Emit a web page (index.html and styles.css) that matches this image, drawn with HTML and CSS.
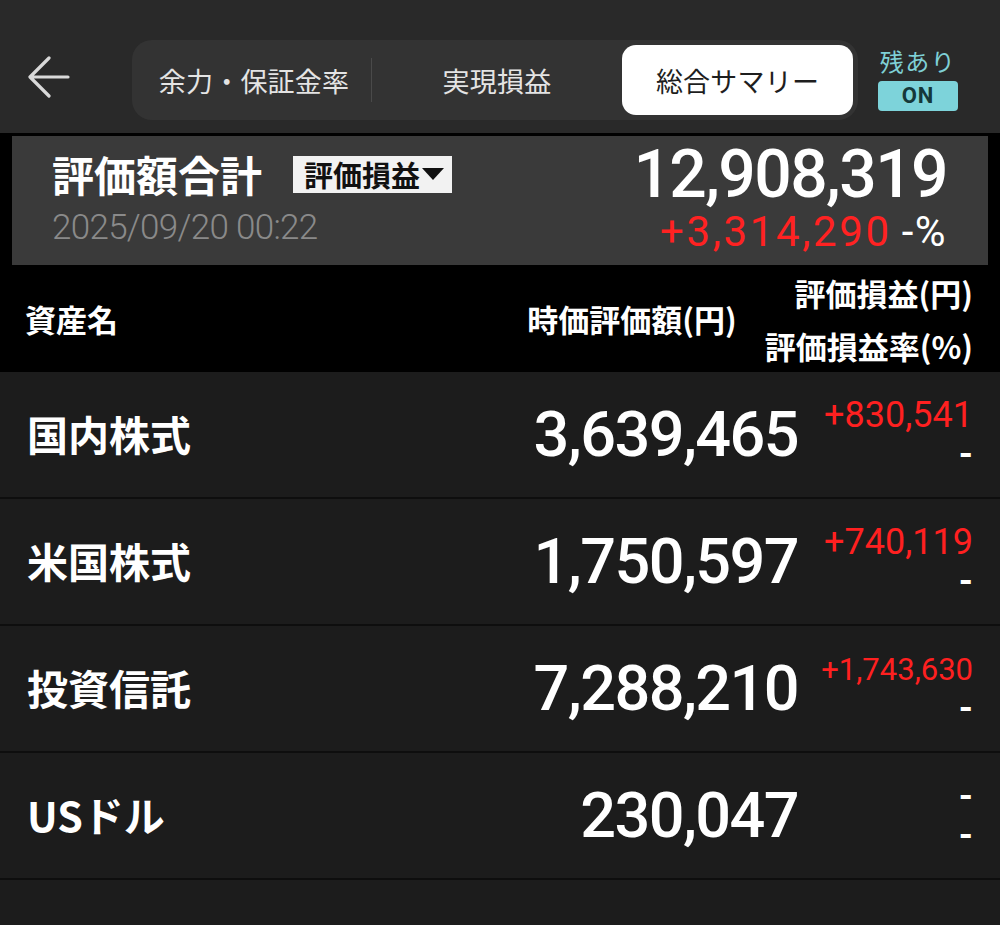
FILE: index.html
```html
<!DOCTYPE html>
<html lang="ja">
<head>
<meta charset="utf-8">
<title>総合サマリー</title>
<link rel="stylesheet" href="styles.css">
</head>
<body>
<div class="topbar">
  <svg class="back" width="42" height="44" viewBox="0 0 42 44" aria-hidden="true">
    <path d="M3 22 H40 M21 3 L2 22 L21 41" fill="none" stroke="#d9d9d9" stroke-width="3.2" stroke-linecap="round" stroke-linejoin="round"/>
  </svg>
  <div class="segment">
    <div class="tab tab1">余力・保証金率</div>
    <div class="divider"></div>
    <div class="tab tab2">実現損益</div>
    <div class="tab tab3 active">総合サマリー</div>
  </div>
  <div class="flag">
    <div class="flag-label">残あり</div>
    <div class="flag-badge">ON</div>
  </div>
</div>

<div class="summary-wrap">
  <div class="summary">
    <div class="summary-left">
      <div class="title-row">
        <div class="title">評価額合計</div>
        <div class="dropdown">評価損益<svg class="tri" width="22" height="12" viewBox="0 0 22 12"><path d="M0 0 H22 L11 12 Z" fill="#111"/></svg></div>
      </div>
      <div class="date">2025/09/20 00:22</div>
    </div>
    <div class="summary-right">
      <div class="total">12,908,319</div>
      <div class="gain-row"><span class="gain">+3,314,290</span><span class="pct">-%</span></div>
    </div>
  </div>
</div>

<div class="thead">
  <div class="th-name">資産名</div>
  <div class="th-value">時価評価額(円)</div>
  <div class="th-gain">
    <div>評価損益(円)</div>
    <div>評価損益率(%)</div>
  </div>
</div>

<div class="rows">
  <div class="row">
    <div class="name">国内株式</div>
    <div class="value">3,639,465</div>
    <div class="pl"><div class="red">+830,541</div><div class="dash">-</div></div>
  </div>
  <div class="row">
    <div class="name">米国株式</div>
    <div class="value">1,750,597</div>
    <div class="pl"><div class="red">+740,119</div><div class="dash">-</div></div>
  </div>
  <div class="row">
    <div class="name">投資信託</div>
    <div class="value">7,288,210</div>
    <div class="pl"><div class="red small">+1,743,630</div><div class="dash">-</div></div>
  </div>
  <div class="row">
    <div class="name">USドル</div>
    <div class="value">230,047</div>
    <div class="pl"><div class="dash">-</div><div class="dash">-</div></div>
  </div>
</div>
</body>
</html>
```

FILE: styles.css
```css
* { box-sizing: border-box; }

html, body {
  margin: 0;
  padding: 0;
}

body {
  width: 1000px;
  min-height: 925px;
  background: #1c1c1c;
  color: #fff;
  font-family: "Noto Sans CJK JP", "Noto Sans", sans-serif;
}

/* ---------- top bar ---------- */
.topbar {
  height: 133px;
  background: #292929;
  display: flex;
  align-items: center;
  padding: 40px 0 13px 28px;
}

.back {
  display: block;
  margin-top: -6px;
}

.segment {
  margin-left: 62px;
  width: 726px;
  height: 80px;
  border-radius: 20px;
  background: #333333;
  padding: 5px;
  display: flex;
  align-items: center;
}

.tab {
  height: 70px;
  display: flex;
  align-items: center;
  justify-content: center;
  font-size: 27px;
  color: #e4e4e4;
  letter-spacing: 0.2px;
}

.tab1 { width: 234px; }
.tab2 { width: 250px; }
.tab3 { width: 231px; }

.divider {
  width: 1px;
  height: 44px;
  background: #4a4a4a;
}

.tab.active {
  background: #ffffff;
  color: #1e1e1e;
  border-radius: 14px;
}

.flag {
  margin-left: 20px;
  margin-top: -4px;
  width: 80px;
  display: flex;
  flex-direction: column;
  align-items: center;
}

.flag-label {
  font-size: 24px;
  line-height: 30px;
  color: #7fd0d6;
  letter-spacing: 1.5px;
}

.flag-badge {
  margin-top: 5px;
  width: 80px;
  height: 30px;
  border-radius: 4px;
  background: #7dd3da;
  color: #15383a;
  font-family: Roboto, "Noto Sans", sans-serif;
  font-weight: 700;
  font-size: 22px;
  line-height: 30px;
  text-align: center;
  letter-spacing: 1px;
}

/* ---------- summary ---------- */
.summary-wrap {
  background: #000;
  padding: 3px 12px 0 12px;
}

.summary {
  height: 129px;
  background: #3a3a3a;
  display: flex;
  justify-content: space-between;
  padding: 0 41px 0 40px;
}

.summary-left {
  padding-top: 17px;
}

.title-row {
  display: flex;
  align-items: center;
  height: 42px;
}

.title {
  font-size: 42px;
  line-height: 42px;
  font-weight: 700;
  color: #fff;
}

.dropdown {
  margin-left: 31px;
  height: 37px;
  width: 159px;
  background: #f2f2f2;
  color: #111;
  font-size: 29px;
  font-weight: 700;
  line-height: 37px;
  display: flex;
  align-items: center;
  padding-left: 11px;
}

.tri {
  display: block;
  margin-left: 2px;
}

.date {
  margin-top: 15px;
  font-family: Roboto, "Noto Sans", sans-serif;
  font-weight: 300;
  font-size: 35px;
  line-height: 35px;
  letter-spacing: -0.7px;
  color: #8a8a8a;
}

.summary-right {
  padding-top: 6px;
  text-align: right;
  font-family: Roboto, "Noto Sans", sans-serif;
}

.total {
  font-size: 66px;
  line-height: 60px;
  font-weight: 500;
  letter-spacing: -1.6px;
  color: #fff;
  padding-top: 3px;
}

.gain-row {
  margin-top: 7px;
  font-size: 42px;
  line-height: 40px;
  font-weight: 400;
}

.gain {
  color: #ff2222;
  letter-spacing: 2.6px;
}

.pct {
  margin-left: 10px;
  color: #fff;
  letter-spacing: 1.5px;
}

/* ---------- table header ---------- */
.thead {
  height: 107px;
  background: #000;
  display: flex;
  align-items: center;
  padding: 0 27px 0 25px;
  font-size: 31px;
  font-weight: 700;
  color: #fff;
}

.th-name {
  flex: 1;
}

.th-gain {
  margin-left: 28px;
  text-align: right;
  line-height: 53px;
}

/* ---------- rows ---------- */
.row {
  height: 127px;
  border-bottom: 2px solid #0e0e0e;
  display: flex;
  align-items: center;
  padding: 0 27px;
}

.name {
  flex: 1;
  font-size: 41px;
  font-weight: 700;
  color: #fff;
  margin-top: -4px;
}

.value {
  font-family: Roboto, "Noto Sans", sans-serif;
  font-size: 63px;
  font-weight: 500;
  letter-spacing: -1.6px;
  color: #fff;
}

.pl {
  width: 175px;
  text-align: right;
  font-family: Roboto, "Noto Sans", sans-serif;
  font-size: 36px;
  line-height: 39px;
}

.red {
  color: #ff2020;
}

.red.small {
  font-size: 31px;
}

.dash {
  color: #fff;
  font-weight: 700;
}
```
